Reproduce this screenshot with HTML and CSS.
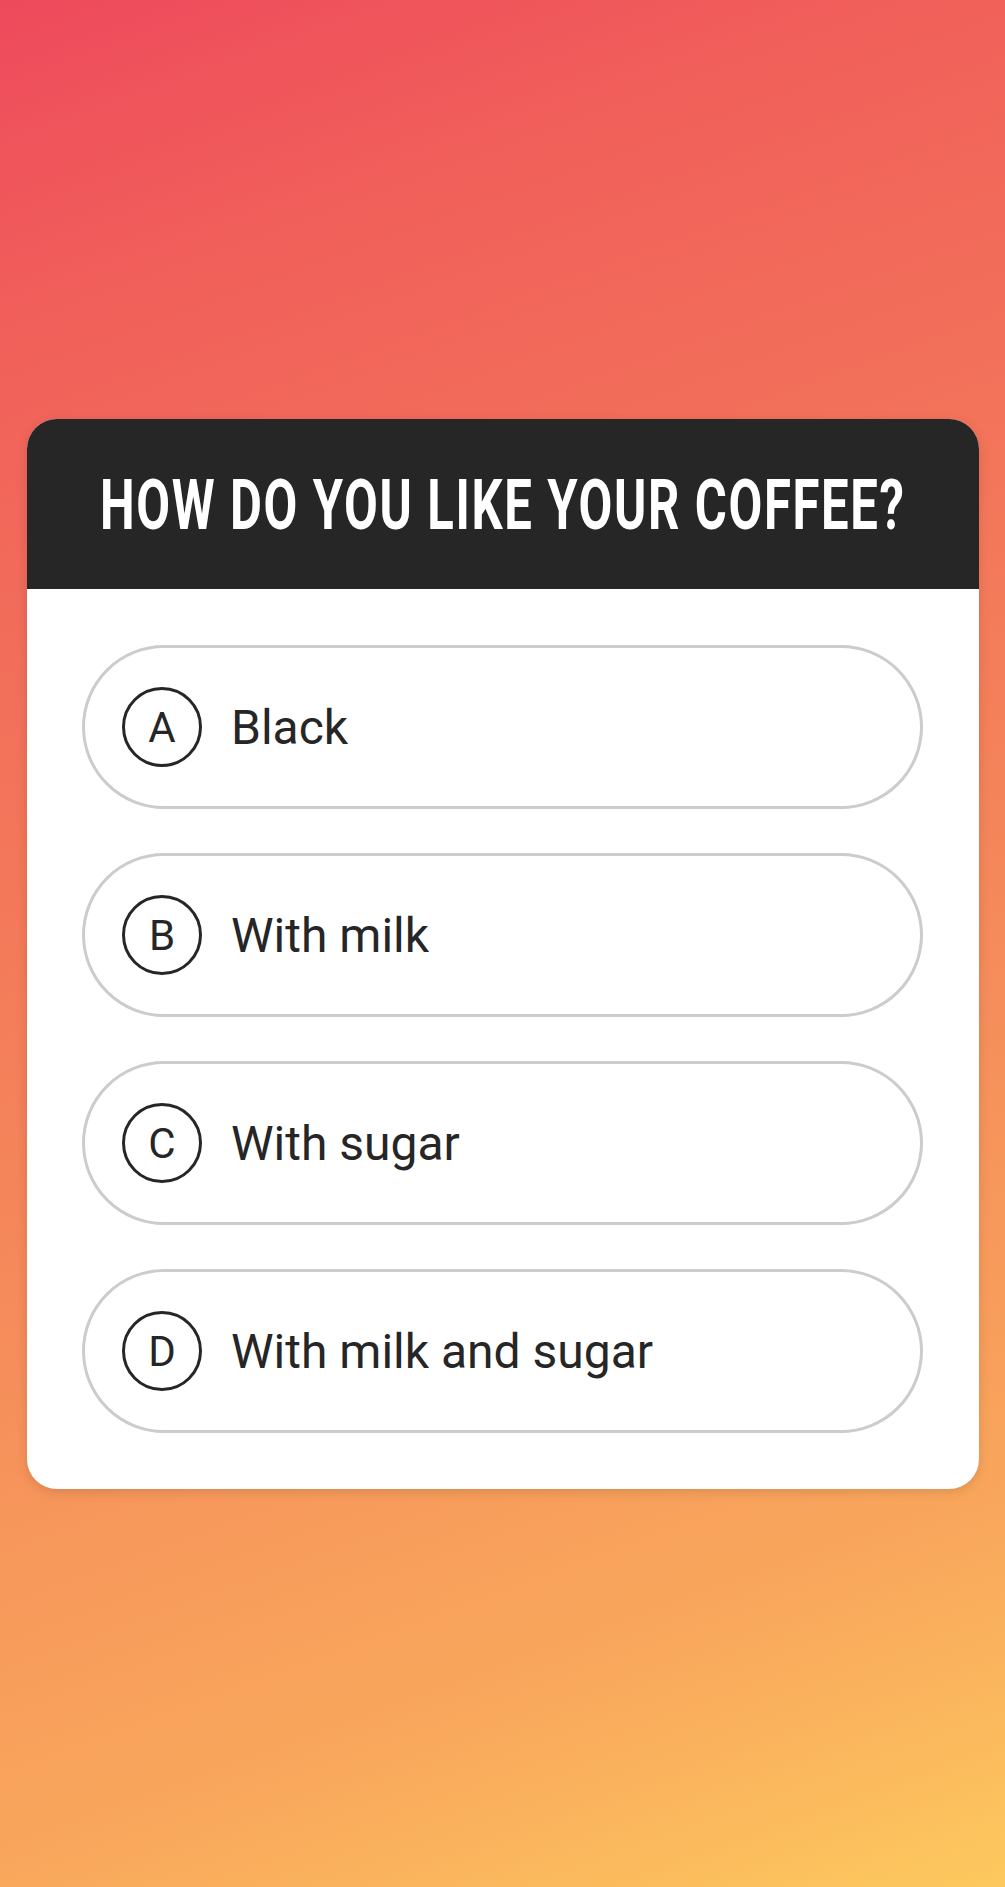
FILE: index.html
```html
<!DOCTYPE html>
<html lang="en">
<head>
<meta charset="utf-8">
<title>Quiz</title>
<link rel="stylesheet" href="styles.css">
</head>
<body>
<main class="page">
  <section class="card">
    <header class="card-head">
      <h1 class="title"><span class="title-text">HOW DO YOU LIKE YOUR COFFEE?</span></h1>
    </header>
    <div class="options">
      <div class="option"><span class="badge">A</span><span class="label">Black</span></div>
      <div class="option"><span class="badge">B</span><span class="label">With milk</span></div>
      <div class="option"><span class="badge">C</span><span class="label">With sugar</span></div>
      <div class="option"><span class="badge">D</span><span class="label">With milk and sugar</span></div>
    </div>
  </section>
</main>
</body>
</html>
```
FILE: styles.css
```css
html, body {
  margin: 0;
  padding: 0;
}
body {
  width: 1005px;
  height: 1887px;
  background: linear-gradient(160deg, #ee4a5c 0%, #f1615a 16%, #f4825a 50%, #f9a85c 84%, #fdc95e 100%);
  font-family: Roboto, "Noto Sans", sans-serif;
  overflow: hidden;
}
.page {
  display: flex;
  flex-direction: column;
  align-items: flex-start;
  padding: 419px 0 0 27px;
}
.card {
  width: 952px;
  background: #ffffff;
  border-radius: 30px;
  overflow: hidden;
  box-shadow: 0 3px 12px rgba(0, 0, 0, 0.12);
}
.card-head {
  height: 170px;
  background: #262626;
  display: flex;
  align-items: center;
  justify-content: center;
}
.title {
  margin: 0;
  font-weight: 700;
  font-size: 71px;
  line-height: 1;
  color: #ffffff;
  white-space: nowrap;
  display: flex;
  justify-content: center;
  width: 100%;
}
.title-text {
  display: inline-block;
  transform: scaleX(0.69);
  letter-spacing: 2.4px;
}
.options {
  display: flex;
  flex-direction: column;
  gap: 44px;
  padding: 56px 56px 56px 55px;
}
.option {
  height: 158px;
  border: 3px solid #cccccc;
  border-radius: 90px;
  display: flex;
  align-items: center;
  padding-left: 37px;
  gap: 29px;
}
.badge {
  width: 74px;
  height: 74px;
  border: 3.5px solid #262626;
  border-radius: 50%;
  display: flex;
  align-items: center;
  justify-content: center;
  font-size: 42px;
  font-weight: 400;
  color: #262626;
  flex: none;
}
.label {
  font-size: 48px;
  color: #262626;
  font-weight: 400;
}
```
